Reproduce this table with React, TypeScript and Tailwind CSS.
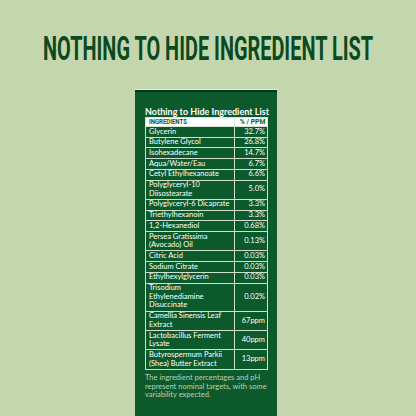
import { useLayoutEffect, useRef, useState } from "react";

const ROWS: [string, string][] = [
  ["Glycerin", "32.7%"],
  ["Butylene Glycol", "26.8%"],
  ["Isohexadecane", "14.7%"],
  ["Aqua/Water/Eau", "6.7%"],
  ["Cetyl Ethylhexanoate", "6.6%"],
  ["Polyglyceryl-10 Diisostearate", "5.0%"],
  ["Polyglyceryl-6 Dicaprate", "3.3%"],
  ["Triethylhexanoin", "3.3%"],
  ["1,2-Hexanediol", "0.68%"],
  ["Persea Gratissima (Avocado) Oil", "0.13%"],
  ["Citric Acid", "0.03%"],
  ["Sodium Citrate", "0.03%"],
  ["Ethylhexylglycerin", "0.03%"],
  ["Trisodium Ethylenediamine Disuccinate", "0.02%"],
  ["Camellia Sinensis Leaf Extract", "67ppm"],
  ["Lactobacillus Ferment Lysate", "40ppm"],
  ["Butyrospermum Parkii (Shea) Butter Extract", "13ppm"],
];

const BODY_FONT = '"Lato", "Open Sans", sans-serif';
const NARROW_FONT = '"Roboto", "Liberation Sans", sans-serif';

// squeeze a heading to a target width (the reference uses a condensed face)
function Squeezed({ width, children, className }: { width: number; children: string; className: string }) {
  const ref = useRef<HTMLSpanElement>(null);
  const [sx, setSx] = useState(1);
  useLayoutEffect(() => {
    if (ref.current) setSx(width / ref.current.offsetWidth);
  }, [width]);
  return (
    <div className="flex justify-center" style={{ width }}>
      <span
        ref={ref}
        className={"inline-block whitespace-nowrap origin-center " + className}
        style={{ transform: `scale(${sx}, 1.08)`, fontFamily: NARROW_FONT }}
      >
        {children}
      </span>
    </div>
  );
}

export default function App() {
  return (
    <div className="w-[416px] h-[416px] overflow-hidden bg-[#c4d6ad] flex flex-col items-center">
      <div className="mt-[31px] h-[36px] flex items-center">
        <Squeezed width={330} className="text-[#0b4a20] font-bold text-[31px] leading-[36px]">
          NOTHING TO HIDE INGREDIENT LIST
        </Squeezed>
      </div>
      <div
        className="mt-[23px] ml-[-4px] w-[142px] flex-1 bg-[#0c5a2c] border-t-[2px] border-[#08361a] shadow-[0_-1px_0_#e8efe4] pl-[10px] pr-[9px] pt-[14px] text-white"
        style={{ fontFamily: BODY_FONT }}
      >
        <div className="text-[9px] font-bold leading-[11px] whitespace-nowrap">
          Nothing to Hide Ingredient List
        </div>
        <table className="w-full border-collapse text-[7.5px] leading-[8.7px]">
          <tbody>
            <tr className="bg-white text-[#0c5a2c]">
              <td
                className="border border-[#d8e6d6] px-[3px] h-[9px] py-0 font-bold text-[8px] leading-[8px]"
                style={{ fontFamily: NARROW_FONT }}
              >
                <span className="inline-block origin-left scale-x-[0.75]">INGREDIENTS</span>
              </td>
              <td
                className="border border-[#d8e6d6] px-[2px] py-0 text-right font-bold w-[29px] whitespace-nowrap text-[7.5px] leading-[8px]"
                style={{ fontFamily: NARROW_FONT }}
              >
                <span className="inline-block origin-right scale-x-[0.9]">% / PPM</span>
              </td>
            </tr>
            {ROWS.map(([name, val]) => (
              <tr key={name}>
                <td className="border border-[#cfe0cf] pl-[3px] pr-[1px] py-[0.5px] align-middle">{name}</td>
                <td className="border border-[#cfe0cf] px-[2px] py-[0.5px] text-right align-middle whitespace-nowrap">{val}</td>
              </tr>
            ))}
          </tbody>
        </table>
        <p className="mt-[4px] text-[7.5px] leading-[8.7px] text-[#b4d2bb]">
          The ingredient percentages and pH represent nominal targets, with some variability expected.
        </p>
      </div>
    </div>
  );
}
